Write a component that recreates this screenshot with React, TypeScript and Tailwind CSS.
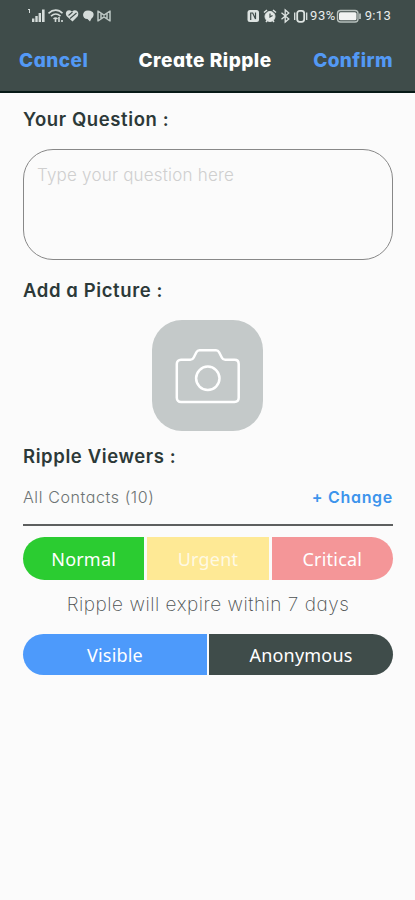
import clsx from "clsx";
import type { ReactNode } from "react";

const geometric = "font-[Inter,sans-serif] [font-feature-settings:'cv11','ss03']";

function StatusIcons() {
  return (
    <svg className="h-4 w-[86px]" viewBox="0 0 86 16" fill="none" aria-hidden="true">
      <g fill="#d5dcda">
        <path d="M0 1h2v4H1V2H0zM4 10.500h2.400V14H4zM7.300 8h2.400v6H7.300zM10.600 5H13v9h-2.400zM14 1.500h2.600V14H14z" />
        <path d="m44.500 13.500-5.500-5C36 5 39.500 0 44 3.500 48.500 0 52 5 49.500 8.500z" />
        <path d="M62 13.500 59.500 11C53.500 11 53.500 2.500 60 2.500c6.500 0 7 5.500 3.500 8z" />
      </g>
      <g stroke="#d5dcda" strokeWidth="1.600">
        <path d="M20.500 5.300c4.500-4.200 10-4.200 14 0M23 8.200c3-2.800 6.500-2.800 9.500 0M25.500 10.800c1.500-1.200 2.500-1.200 4 0" />
        <path d="M27.500 10v4M31 9v5M34 12v2" />
      </g>
      <path d="m40.500 7.500 4-3.500M42 10.500l6.500-5.500" stroke="#3f4c4a" strokeWidth="1.100" />
      <g stroke="#bcc6c3" strokeWidth="1.500">
        <path d="M70 2.500v11M82 2.500v11M70 3l6 4 6-4M70 13l6-4 6 4M73 5v6M79 5v6" />
      </g>
    </svg>
  );
}

function DeviceIcons() {
  return (
    <svg className="h-4 w-[62px] shrink-0" viewBox="0 0 62 16" fill="none" stroke="#dde3e1" aria-hidden="true">
      <rect x="0.500" y="2" width="11.500" height="12" rx="2.500" fill="#dde3e1" stroke="none" />
      <path d="M3.700 12V5h2l2.800 6V4.500" stroke="#3f4c4a" strokeWidth="1.200" />
      <circle cx="23" cy="8.500" r="5" fill="#e3e8e6" />
      <path d="m17 4.500 3-2.500M29 4.500 26 2M19 14l1.500-2M27 14l-1.500-2" strokeWidth="1.500" />
      <path d="M23 5.500V9l2.500-1.500" stroke="#3f4c4a" strokeWidth="1.200" />
      <path d="m34.500 4.800 7.300 6.200-3.600 3V2l3.600 3-7.300 6.200" strokeWidth="1.300" />
      <rect x="50.200" y="2.800" width="7" height="11" rx="2.500" strokeWidth="1.800" />
      <path d="M47.700 4.500v7.500M59.700 4.500v7.500" strokeWidth="1.300" />
    </svg>
  );
}

function Battery() {
  return (
    <svg className="h-4 w-[26px] shrink-0" viewBox="0 0 26 16" fill="none" aria-hidden="true">
      <rect x="1.500" y="2.500" width="20.500" height="11.500" rx="3" stroke="#b7c0bd" strokeWidth="1.400" />
      <rect x="3" y="4.200" width="17.500" height="8" rx="1.500" fill="#f1f3f2" />
      <path d="M24 5.500v5.500" stroke="#c3cbc8" strokeWidth="1.600" />
    </svg>
  );
}

function CameraIcon() {
  return (
    <svg className="h-14 w-[66px]" viewBox="0 0 66 56" fill="none" stroke="white" strokeWidth="2.500" strokeLinejoin="round" aria-hidden="true">
      <path d="M6 11.800h9.300c1.700 0 2.600-.6 3.300-2l2.800-5.500c.7-1.400 1.600-2.100 3.100-2.100H41c1.500 0 2.400.7 3.100 2.100l2.800 5.500c.7 1.400 1.600 2 3.300 2h9.300c2.500 0 4.200 1.700 4.200 4.200v33.800c0 2.500-1.700 4.200-4.200 4.200H6c-2.500 0-4.200-1.700-4.200-4.200V16c0-2.500 1.700-4.200 4.200-4.200Z" />
      <circle cx="32.800" cy="30.300" r="11.700" />
    </svg>
  );
}

function Heading({ children, className }: { children: ReactNode; className?: string }) {
  return (
    <h2 className={clsx("text-[18.5px] leading-7 font-semibold tracking-[0.6px] text-[#2c3938]", className)}>
      {children}
    </h2>
  );
}

const priorities = [
  { label: "Normal", className: "rounded-l-full bg-[#2bcc31]" },
  { label: "Urgent", className: "bg-[#fee995] text-white/75" },
  { label: "Critical", className: "rounded-r-full bg-[#f49698]" },
];

export default function App() {
  return (
    <div className={clsx("min-h-screen bg-[#fbfbfb]", geometric)}>
      <header className="h-[93px] border-b-2 border-[#071a17] bg-[#3f4c4a]">
        <div className="flex h-[31px] items-center pr-[24px] pl-[28px] font-[Roboto,sans-serif] text-[13px] text-[#e9edec]">
          <StatusIcons />
          <div className="ml-auto flex items-center">
            <DeviceIcons />
            <span className="ml-px tracking-[0.5px]">93%</span>
            <Battery />
            <span className="ml-[3px] tracking-[0.3px]">9:13</span>
          </div>
        </div>
        <div className="flex h-[60px] items-center pr-[22px] pl-[19px] text-[19px] font-extrabold">
          <button className="tracking-[0.5px] text-[#5399f5]">Cancel</button>
          <h1 className="ml-[50px] tracking-[0.5px] text-white">Create Ripple</h1>
          <button className="ml-auto tracking-[0.4px] text-[#5399f5]">Confirm</button>
        </div>
      </header>

      <main className="pt-3 pr-[22px] pl-[23px]">
        <Heading>Your Question :</Heading>
        <textarea
          placeholder="Type your question here"
          className="mt-4 block h-[111px] w-full resize-none rounded-[30px] border border-[#888] px-[13px] pt-[13px] text-[17px] font-light tracking-[0.2px] outline-none placeholder:text-[#cfcfcf]"
        />
        <Heading className="mt-4">Add a Picture :</Heading>
        <button className="mt-4 ml-[129px] flex size-[111px] items-center justify-center rounded-[30px] bg-[#c4c9c9]">
          <CameraIcon />
        </button>
        <Heading className="mt-[11px]">Ripple Viewers :</Heading>
        <div className="mt-[13px] flex h-[43px] items-start justify-between border-b-2 border-[#5d5f5f] pt-0.5 text-[16px]">
          <span className="font-light tracking-[0.6px] text-[#6d7373]">All Contacts (10)</span>
          <button className="font-semibold tracking-[0.7px] text-[#3d94ec]">+ Change</button>
        </div>

        <div className="mt-[11px] grid h-[43px] grid-cols-3 gap-[3px] font-['Noto_Sans',sans-serif] text-[18px] tracking-[0.2px] text-white">
          {priorities.map((p) => (
            <button key={p.label} className={clsx("pt-0.5", p.className)}>
              {p.label}
            </button>
          ))}
        </div>
        <p className="mt-[11px] text-center text-[19px] leading-7 font-extralight tracking-[0.52px] text-[#4d5252]">
          Ripple will expire within 7 days
        </p>
        <div className="mt-[15px] grid h-[41px] grid-cols-2 gap-[2px] font-['Noto_Sans',sans-serif] text-[18px] tracking-[0.2px] text-white">
          <button className="rounded-l-full bg-[#4d9afb] pt-0.5">Visible</button>
          <button className="rounded-r-full bg-[#3f4c4a] pt-0.5">Anonymous</button>
        </div>
      </main>
    </div>
  );
}
